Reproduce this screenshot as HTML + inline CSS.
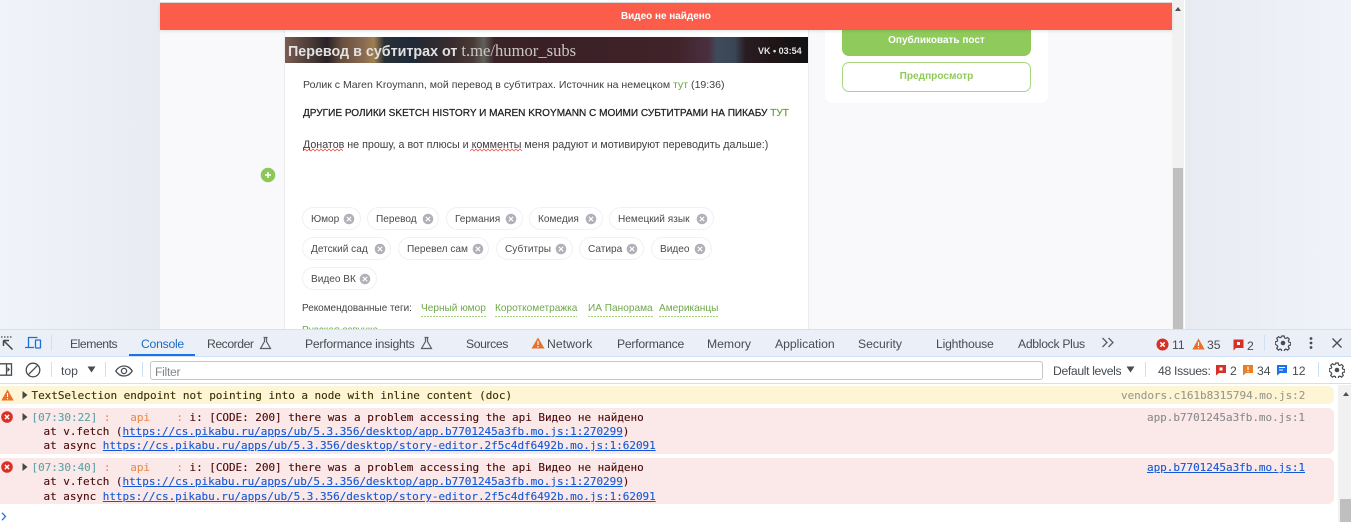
<!DOCTYPE html>
<html lang="ru"><head><meta charset="utf-8"><title>DevTools</title>
<style>
html,body{margin:0;padding:0;width:1351px;height:522px;overflow:hidden;background:#fff}
body{position:relative;font-family:"Liberation Sans",sans-serif}
.a,.t{position:absolute}
.t{white-space:nowrap}
.p{font-size:10.55px;color:#3f3f3f;line-height:14px}
.g{color:#66a83a}
.tag{position:absolute;height:21px;border:1px solid #f1f1f4;border-radius:12px;background:#fff;box-sizing:content-box}
.tag span{position:absolute;left:8px;top:5px;font-size:10.1px;line-height:14px;color:#4a4a4a;white-space:nowrap}
.tag svg{position:absolute;top:5px;right:5px}
.rt{font-size:10.1px;line-height:14px;color:#6fa84a;padding-bottom:1px;white-space:nowrap;position:absolute;top:302px;background:repeating-linear-gradient(90deg,#a5d07e 0 2px,transparent 2px 3px) left bottom/100% 1px no-repeat}
.d{font-size:12.2px;line-height:16px;color:#474c52}
.m{font-family:"DejaVu Sans Mono","Liberation Mono",monospace;font-size:11px;letter-spacing:-.04px;line-height:14px;color:#202124;white-space:pre;position:absolute;-webkit-text-stroke:.12px currentColor}
.l{color:#1558d6;text-decoration:underline}
.s{color:#8c8c8c}
.sep{position:absolute;width:1px;background:#cfe0f5}
</style></head><body>

<!-- page -->
<div class="a" style="left:0;top:0;width:160px;height:330px;background:linear-gradient(90deg,#f1f3fa,#e9ebf3)"></div>
<div class="a" style="left:1185px;top:0;width:166px;height:330px;background:linear-gradient(90deg,#e9ebf3,#f1f3fa)"></div>
<div class="a" style="left:160px;top:0;width:1012px;height:330px;background:#f9f9fc"></div>
<div class="a" style="left:160px;top:0;width:1025px;height:3px;background:#fff"></div>
<div class="a" style="left:160px;top:2px;width:1012px;height:1px;background:#dcdcdc"></div>
<div class="a" style="left:1172px;top:0;width:12px;height:330px;background:#f1f1f1"></div>
<div class="a" style="left:1173px;top:168px;width:10px;height:162px;background:#bfbfbf"></div>
<div class="a" style="left:1184px;top:0;width:1px;height:330px;background:#fff"></div>
<svg class="a" style="left:1174px;top:6px" width="8" height="6"><path d="M4 1L7 5H1z" fill="#505050"/></svg>

<div class="a" style="left:284px;top:3px;width:525px;height:327px;background:#fff;border-left:1px solid #ececef;border-right:1px solid #ececef;box-sizing:border-box"></div>

<!-- video strip -->
<div class="a" style="left:285px;top:37px;width:523px;height:26px;overflow:hidden;background:linear-gradient(90deg,#7a5c50 0%,#4a3a38 5%,#2a2226 8%,#6a5040 11%,#8a6a50 15%,#a08050 17%,#2a3038 19%,#1f2a38 24%,#2a2a30 27%,#3a2c2e 32%,#4a3a36 36%,#606058 38%,#3a2428 40%,#3a2026 50%,#41232a 75%,#4a3040 81%,#3f4a5a 82.5%,#3a4656 86%,#2a1d22 88%,#201618 93%,#111 100%)">
  <div class="t" style="left:3px;top:5px;font-size:14.3px;line-height:18px;font-weight:bold;color:#e2e2e2">Перевод в субтитрах от <span style="font-family:'Liberation Serif',serif;font-weight:normal;font-size:16.6px;color:#c9c6c4">t.me/humor_subs</span></div>
  <div class="t" style="left:473px;top:8px;font-size:9px;line-height:12px;font-weight:bold;color:#e4e4e4">VK • 03:54</div>
</div>

<div class="t p" style="left:303px;top:78px">Ролик с Maren Kroymann, мой перевод в субтитрах. Источник на немецком <span class="g">тут</span> (19:36)</div>
<div class="t p" style="left:303px;top:107px;color:#222;font-size:10.05px;-webkit-text-stroke:.25px #222">ДРУГИЕ РОЛИКИ SKETCH HISTORY И MAREN KROYMANN С МОИМИ СУБТИТРАМИ НА ПИКАБУ <span class="g" style="-webkit-text-stroke:.25px #66a83a">ТУТ</span></div>
<div class="t p" style="left:303px;top:138px;font-size:10.7px">Донатов не прошу, а вот плюсы и комменты меня радуют и мотивируют переводить дальше:)</div>
<svg class="a" style="left:303px;top:148px" width="225" height="4"><path d="M0 3l2-2 2 2 2-2 2 2 2-2 2 2 2-2 2 2 2-2 2 2 2-2 2 2 2-2 2 2 2-2 2 2 2-2 2 2 2-2 2 2M167 3l2-2 2 2 2-2 2 2 2-2 2 2 2-2 2 2 2-2 2 2 2-2 2 2 2-2 2 2 2-2 2 2 2-2 2 2 2-2 2 2 2-2 2 2 2-2 2 2 2-2 2 2" fill="none" stroke="#e0423c" stroke-width=".7"/></svg>

<svg class="a" style="left:260px;top:167px" width="16" height="16"><circle cx="8" cy="8" r="7.300" fill="#8cc857"/><path d="M8 5v6M5 8h6" stroke="#fff" stroke-width="1.500"/></svg>

<!-- tags -->
<div class="tag" style="left:302px;top:207px;width:57px"><span>Юмор</span><svg width="12" height="12"><use href="#x"/></svg></div>
<div class="tag" style="left:367px;top:207px;width:70px"><span>Перевод</span><svg style="right:4px" width="12" height="12"><use href="#x"/></svg></div>
<div class="tag" style="left:446px;top:207px;width:75px"><span>Германия</span><svg width="12" height="12"><use href="#x"/></svg></div>
<div class="tag" style="left:529px;top:207px;width:72px"><span>Комедия</span><svg width="12" height="12"><use href="#x"/></svg></div>
<div class="tag" style="left:609px;top:207px;width:103px"><span>Немецкий язык</span><svg width="12" height="12"><use href="#x"/></svg></div>
<div class="tag" style="left:302px;top:237px;width:87px"><span>Детский сад</span><svg style="right:4px" width="12" height="12"><use href="#x"/></svg></div>
<div class="tag" style="left:398px;top:237px;width:89px"><span>Перевел сам</span><svg style="right:4px" width="12" height="12"><use href="#x"/></svg></div>
<div class="tag" style="left:496px;top:237px;width:75px"><span>Субтитры</span><svg width="12" height="12"><use href="#x"/></svg></div>
<div class="tag" style="left:579px;top:237px;width:63px"><span>Сатира</span><svg width="12" height="12"><use href="#x"/></svg></div>
<div class="tag" style="left:651px;top:237px;width:59px"><span>Видео</span><svg width="12" height="12"><use href="#x"/></svg></div>
<div class="tag" style="left:302px;top:267px;width:73px"><span>Видео ВК</span><svg width="12" height="12"><use href="#x"/></svg></div>
<svg width="0" height="0" style="position:absolute"><defs><g id="x"><circle cx="6" cy="6" r="5.300" fill="#b0b0b8"/><path d="M3.800 3.800l4.400 4.400M8.200 3.800L3.800 8.200" stroke="#fff" stroke-width="1.100"/></g></defs></svg>

<div class="t" style="left:302px;top:302px;font-size:9.95px;line-height:14px;color:#444">Рекомендованные теги:</div>
<div class="rt" style="left:421px">Черный юмор</div>
<div class="rt" style="left:495px">Короткометражка</div>
<div class="rt" style="left:588px">ИА Панорама</div>
<div class="rt" style="left:659px">Американцы</div>
<div class="t" style="left:302px;top:324px;font-size:10.1px;line-height:14px;color:#6fa84a">Русская озвучка</div>

<!-- side card -->
<div class="a" style="left:825px;top:20px;width:223px;height:83px;background:#fff;border-radius:0 0 7px 7px"></div>
<div class="a" style="left:842px;top:20px;width:189px;height:36px;background:#8fcb5a;border-radius:0 0 7px 7px"></div>
<div class="t" style="left:842px;top:34px;width:189px;text-align:center;font-size:10px;line-height:14px;font-weight:bold;color:#fff">Опубликовать пост</div>
<div class="a" style="left:842px;top:62px;width:189px;height:30px;box-sizing:border-box;border:1px solid #a9d882;border-radius:7px;background:#fff"></div>
<div class="t" style="left:842px;top:70px;width:189px;text-align:center;font-size:10.1px;line-height:14px;font-weight:bold;color:#8fcb5a">Предпросмотр</div>

<!-- red bar -->
<div class="a" style="left:160px;top:3px;width:1012px;height:27px;background:#fc5c4a;box-shadow:0 1px 3px rgba(0,0,0,.12)"></div>
<div class="t" style="left:621px;top:10px;font-size:9.95px;line-height:14px;font-weight:bold;color:#fff">Видео не найдено</div>

<!-- devtools toolbar -->
<div class="a" style="left:0;top:329px;width:1351px;height:1px;background:#cfe0f8"></div>
<div class="a" style="left:0;top:330px;width:1351px;height:26px;background:#eaeff8"></div>
<div class="a" style="left:0;top:356px;width:1351px;height:1px;background:#cfe0f8"></div>
<div class="a" style="left:0;top:357px;width:1351px;height:27px;background:#fff"></div>
<div class="a" style="left:0;top:383px;width:1351px;height:1px;background:#cfe0f8"></div>

<svg class="a" style="left:0;top:335px" width="16" height="16" fill="none" stroke="#444" stroke-width="1.300"><path d="M1 2h1.500M4 2h1.500M7 2h1.500M10 2h1.500"/><path d="M3.500 5.500H9M3.500 5.500V11M3.500 5.500l9 9" stroke-width="1.500"/></svg>
<svg class="a" style="left:25px;top:336px" width="17" height="14" fill="none" stroke="#1a6fd8" stroke-width="1.300"><path d="M3.500 11V1.500h9M0 11.500h9"/><rect x="10.500" y="4" width="5" height="8" rx=".5"/></svg>
<div class="sep" style="left:51px;top:335px;height:16px"></div>
<div class="t d" style="left:70px;top:336px;letter-spacing:-.45px">Elements</div>
<div class="t d" style="left:141px;top:336px;color:#1a6dc8;letter-spacing:-.25px">Console</div>
<div class="a" style="left:129px;top:354px;width:66px;height:2px;background:#1a73e8"></div>
<div class="t d" style="left:207px;top:336px;letter-spacing:-.45px">Recorder</div>
<svg class="a" style="left:259px;top:336px" width="13" height="14" fill="none" stroke="#5a5f66" stroke-width="1.200"><path d="M4.500 1.500h4M5.500 1.500v4L1.500 12.500h10L7.500 5.500v-4"/></svg>
<div class="t d" style="left:305px;top:336px;letter-spacing:-.25px">Performance insights</div>
<svg class="a" style="left:420px;top:336px" width="13" height="14" fill="none" stroke="#5a5f66" stroke-width="1.200"><path d="M4.500 1.500h4M5.500 1.500v4L1.500 12.500h10L7.500 5.500v-4"/></svg>
<div class="t d" style="left:466px;top:336px;letter-spacing:-.4px">Sources</div>
<svg class="a" style="left:531px;top:337px" width="14" height="12"><path d="M7 .5L13.500 11.500H.5z" fill="#e8702a"/><path d="M7 4v4M7 9v1.300" stroke="#fff" stroke-width="1.200"/></svg>
<div class="t d" style="left:547px;top:336px;letter-spacing:.1px">Network</div>
<div class="t d" style="left:617px;top:336px;letter-spacing:-.25px">Performance</div>
<div class="t d" style="left:707px;top:336px">Memory</div>
<div class="t d" style="left:775px;top:336px">Application</div>
<div class="t d" style="left:858px;top:336px">Security</div>
<div class="t d" style="left:936px;top:336px;letter-spacing:-.2px">Lighthouse</div>
<div class="t d" style="left:1018px;top:336px;letter-spacing:-.3px">Adblock Plus</div>
<svg class="a" style="left:1101px;top:337px" width="14" height="11" fill="none" stroke="#5a5f66" stroke-width="1.300"><path d="M1.500 1l4.500 4.500L1.500 10M7.500 1L12 5.500 7.500 10"/></svg>

<svg class="a" style="left:1156px;top:338px" width="13" height="13"><circle cx="6.500" cy="6.500" r="6" fill="#d93025"/><path d="M4.300 4.300l4.400 4.400M8.700 4.300L4.300 8.700" stroke="#fff" stroke-width="1.500"/></svg>
<div class="t d" style="left:1172px;top:337px">11</div>
<svg class="a" style="left:1192px;top:338px" width="13" height="12"><path d="M6.500 .5L12.700 11.500H.3z" fill="#e8702a"/><path d="M6.500 4v4M6.500 9v1.300" stroke="#fff" stroke-width="1.100"/></svg>
<div class="t d" style="left:1207px;top:337px">35</div>
<svg class="a" style="left:1233px;top:339px" width="11" height="12"><path d="M.5 .5h10v8.500H3L.5 11.500z" fill="#d93025"/><rect x="4" y="3" width="3" height="3" fill="#fff"/></svg>
<div class="t d" style="left:1247px;top:338px">2</div>
<div class="sep" style="left:1264px;top:335px;height:16px"></div>
<svg class="a" style="left:1275px;top:335px" width="16" height="16"><use href="#gear"/></svg>
<svg class="a" style="left:1309px;top:336px" width="4" height="14"><circle cx="2" cy="2.500" r="1.400" fill="#474c52"/><circle cx="2" cy="7" r="1.400" fill="#474c52"/><circle cx="2" cy="11.500" r="1.400" fill="#474c52"/></svg>
<svg class="a" style="left:1331px;top:337px" width="12" height="12"><path d="M1.500 1.500l9 9M10.500 1.500l-9 9" stroke="#474c52" stroke-width="1.300"/></svg>
<svg width="0" height="0" style="position:absolute"><defs><g id="gear"><path d="M6.800 1h2.400l.4 1.900 1.300.6 1.700-1 1.700 1.700-1 1.700.6 1.300 1.900.4v2.400l-1.900.4-.6 1.300 1 1.700-1.700 1.700-1.700-1-1.300.6-.4 1.900H6.800l-.4-1.900-1.300-.6-1.700 1-1.700-1.700 1-1.700-.6-1.300L.2 9.200V6.800l1.900-.4.6-1.300-1-1.700 1.700-1.700 1.700 1 1.300-.6z" fill="none" stroke="#474c52" stroke-width="1.200"/><circle cx="8" cy="8" r="2.300" fill="#474c52"/></g></defs></svg>

<!-- second toolbar -->
<svg class="a" style="left:0;top:363px" width="13" height="13" fill="none" stroke="#474c52" stroke-width="1.300"><path d="M0 .8h11.500v11.400H0M6.500 .8v11.400"/><path d="M7.500 4l2.500 2.500L7.500 9z" fill="#474c52" stroke="none"/></svg>
<svg class="a" style="left:25px;top:362px" width="16" height="16" fill="none" stroke="#474c52" stroke-width="1.300"><circle cx="8" cy="8" r="6.800"/><path d="M3.200 12.800L12.800 3.200"/></svg>
<div class="sep" style="left:51px;top:362px;height:15px"></div>
<div class="t d" style="left:61px;top:363px">top</div>
<svg class="a" style="left:87px;top:366px" width="9" height="7"><path d="M.5 .5h8L4.500 6.500z" fill="#474c52"/></svg>
<div class="sep" style="left:105px;top:362px;height:15px"></div>
<svg class="a" style="left:115px;top:365px" width="18" height="12" fill="none" stroke="#474c52" stroke-width="1.300"><path d="M.8 6C3 2.500 6 1 9 1s6 1.500 8.200 5C15 9.500 12 11 9 11S3 9.500 .8 6z"/><circle cx="9" cy="6" r="2.600"/></svg>
<div class="sep" style="left:142px;top:362px;height:15px"></div>
<div class="a" style="left:150px;top:361px;width:893px;height:19px;box-sizing:border-box;border:1px solid #c6c6c6;border-radius:3px;background:#fff"></div>
<div class="t d" style="left:155px;top:364px;color:#80868b;letter-spacing:-.3px">Filter</div>
<div class="t d" style="left:1053px;top:363px;letter-spacing:-.35px">Default levels</div>
<svg class="a" style="left:1126px;top:366px" width="9" height="7"><path d="M.5 .5h8L4.500 6.500z" fill="#474c52"/></svg>
<div class="sep" style="left:1145px;top:362px;height:15px"></div>
<div class="t d" style="left:1158px;top:363px;letter-spacing:-.3px">48 Issues:</div>
<svg class="a" style="left:1216px;top:365px" width="10" height="11"><path d="M0 0h10v8H3L0 10.500z" fill="#d93025"/><rect x="3.500" y="2.500" width="3" height="3" fill="#fff"/></svg>
<div class="t d" style="left:1230px;top:363px">2</div>
<svg class="a" style="left:1243px;top:365px" width="10" height="11"><path d="M0 0h10v8H3L0 10.500z" fill="#e8802a"/><path d="M5 1.500v3.500M5 6v1" stroke="#fff" stroke-width="1.100"/></svg>
<div class="t d" style="left:1257px;top:363px">34</div>
<svg class="a" style="left:1277px;top:365px" width="10" height="11"><path d="M0 0h10v8H3L0 10.500z" fill="#1a73e8"/><path d="M2 2.500h6M2 5h4" stroke="#fff" stroke-width="1"/></svg>
<div class="t d" style="left:1292px;top:363px">12</div>
<div class="sep" style="left:1318px;top:362px;height:15px"></div>
<svg class="a" style="left:1329px;top:362px" width="16" height="16"><use href="#gear"/></svg>

<!-- console -->
<div class="a" style="left:0;top:386px;width:1334px;height:18px;background:#fef5d5;border-radius:0 6px 6px 0"></div>
<div class="a" style="left:0;top:408px;width:1334px;height:46px;background:#fbe9e9;border-radius:0 6px 6px 0"></div>
<div class="a" style="left:0;top:458px;width:1334px;height:46px;background:#fbe9e9;border-radius:0 6px 6px 0"></div>
<div class="a" style="left:1338px;top:385px;width:13px;height:137px;background:#f1f1f1"></div>
<div class="a" style="left:1340px;top:499px;width:11px;height:23px;background:#bfbfbf"></div>
<svg class="a" style="left:1342px;top:391px" width="8" height="6"><path d="M4 1L7 5H1z" fill="#505050"/></svg>

<svg class="a" style="left:1px;top:389px" width="13" height="12"><path d="M6.500 .5L12.700 11.500H.3z" fill="#e8702a"/><path d="M6.500 4v4M6.500 9v1.300" stroke="#fff" stroke-width="1.100"/></svg>
<svg class="a" style="left:22px;top:391px" width="6" height="8"><path d="M.5 0L5.500 4 .5 8z" fill="#474747"/></svg>
<div class="m" style="left:31.500px;top:389px;color:#3a3000">TextSelection endpoint not pointing into a node with inline content (doc)</div>
<div class="m s" style="left:1121px;top:389px;color:#9a9a8a">vendors.c161b8315794.mo.js:2</div>

<svg class="a" style="left:1px;top:411px" width="12" height="12"><circle cx="6" cy="6" r="5.800" fill="#d93025"/><path d="M3.900 3.900l4.200 4.200M8.100 3.900L3.900 8.100" stroke="#fff" stroke-width="1.400"/></svg>
<svg class="a" style="left:22px;top:413px" width="6" height="8"><path d="M.5 0L5.500 4 .5 8z" fill="#474747"/></svg>
<div class="m" style="left:31.500px;top:411px;color:#4a0a0a"><span style="color:#5fa3a8">[07:30:22]</span><span style="color:#f08a4b"> :   api    : </span>i: [CODE: 200] there was a problem accessing the api Видео не найдено</div>
<div class="m" style="left:43.500px;top:425px;color:#4a0a0a">at v.fetch (<span class="l">https://cs.pikabu.ru/apps/ub/5.3.356/desktop/app.b7701245a3fb.mo.js:1:270299</span>)</div>
<div class="m" style="left:43.500px;top:439px;color:#4a0a0a">at async <span class="l">https://cs.pikabu.ru/apps/ub/5.3.356/desktop/story-editor.2f5c4df6492b.mo.js:1:62091</span></div>
<div class="m s" style="left:1147px;top:411px">app.b7701245a3fb.mo.js:1</div>

<svg class="a" style="left:1px;top:461px" width="12" height="12"><circle cx="6" cy="6" r="5.800" fill="#d93025"/><path d="M3.900 3.900l4.200 4.200M8.100 3.900L3.900 8.100" stroke="#fff" stroke-width="1.400"/></svg>
<svg class="a" style="left:22px;top:463px" width="6" height="8"><path d="M.5 0L5.500 4 .5 8z" fill="#474747"/></svg>
<div class="m" style="left:31.500px;top:461px;color:#4a0a0a"><span style="color:#5fa3a8">[07:30:40]</span><span style="color:#f08a4b"> :   api    : </span>i: [CODE: 200] there was a problem accessing the api Видео не найдено</div>
<div class="m" style="left:43.500px;top:475px;color:#4a0a0a">at v.fetch (<span class="l">https://cs.pikabu.ru/apps/ub/5.3.356/desktop/app.b7701245a3fb.mo.js:1:270299</span>)</div>
<div class="m" style="left:43.500px;top:490px;color:#4a0a0a">at async <span class="l">https://cs.pikabu.ru/apps/ub/5.3.356/desktop/story-editor.2f5c4df6492b.mo.js:1:62091</span></div>
<div class="m l" style="left:1147px;top:461px">app.b7701245a3fb.mo.js:1</div>

<svg class="a" style="left:1px;top:512px" width="6" height="9" fill="none" stroke="#2a72d8" stroke-width="1.300"><path d="M1 .8L4.500 4.500 1 8.200"/></svg>
</body></html>
